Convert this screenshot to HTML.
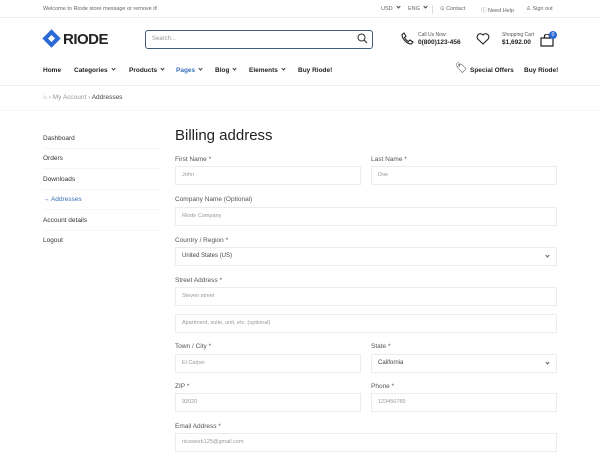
<!DOCTYPE html>
<html><head><meta charset="utf-8"><style>
*{margin:0;padding:0;box-sizing:border-box}
body{width:600px;height:450px;overflow:hidden;background:#fff;font-family:"Liberation Sans",sans-serif;color:#333;position:relative}
.a{position:absolute;white-space:nowrap}
.top{font-size:5.5px;color:#666}
.nav{font-size:6.5px;font-weight:bold;color:#222}
.lab{font-size:6.5px;color:#555}
.inp{position:absolute;height:19px;border:1px solid #ececec;font-size:5.5px;color:#999;padding-left:6px;line-height:17px}
.side{font-size:6.5px;color:#333;position:absolute;left:43px;width:117px;border-bottom:1px solid #f5f5f5;height:20px;line-height:20px}
.chev{position:absolute;right:7px;top:6px;width:3px;height:3px;border-right:1px solid #666;border-bottom:1px solid #666;transform:rotate(45deg)}
.dd:after{content:"";display:inline-block;width:2px;height:2px;border-right:1px solid #444;border-bottom:1px solid #444;transform:rotate(45deg);margin-left:4px;position:relative;top:-2px}
</style></head><body>
<div class="a" style="left:0;top:17px;width:600px;border-top:1px solid #eee"></div>
<div class="a top" style="left:43px;top:6px">Welcome to Riode store message or remove it!</div>
<div class="a top dd" style="left:381px;top:6px">USD</div>
<div class="a top dd" style="left:408px;top:6px">ENG</div>
<div class="a" style="left:432px;top:5px;height:9px;border-left:1px solid #ddd"></div>
<div class="a top" style="left:440px;top:6px">⊙ Contact</div>
<div class="a top" style="left:481px;top:6px">ⓘ Need Help</div>
<div class="a top" style="left:526px;top:6px">♙ Sign out</div>
<div class="a" style="left:45px;top:32px;width:13px;height:13px;background:#2b6bd6;transform:rotate(45deg)"></div>
<div class="a" style="left:49px;top:36px;width:5px;height:5px;background:#fff;transform:rotate(45deg)"></div>
<div class="a" style="left:63px;top:31px;font-size:15px;font-weight:bold;color:#222;letter-spacing:-0.5px">RIODE</div>
<div class="a" style="left:145px;top:30px;width:228px;height:19px;border:1.5px solid #3f5d7a;border-radius:3px;font-size:6px;color:#999;padding:5px 6px">Search...</div>
<svg class="a" style="left:357px;top:33px" width="11" height="11" viewBox="0 0 11 11"><circle cx="4.5" cy="4.5" r="3.5" fill="none" stroke="#333" stroke-width="1"/><path d="M7 7l3 3" stroke="#333" stroke-width="1.2"/></svg>
<svg class="a" style="left:401px;top:32px" width="13" height="13" viewBox="0 0 13 13"><path d="M3 1l2 3-1.5 1.5c1 2 2 3 4 4L9 8l3 2-1.5 2C6 12 1 7 1 2.5z" fill="none" stroke="#222" stroke-width="1.1"/></svg>
<div class="a" style="left:418px;top:32px;font-size:5px;color:#555">Call Us Now:</div>
<div class="a" style="left:418px;top:39px;font-size:6.5px;font-weight:bold;color:#222">0(800)123-456</div>
<svg class="a" style="left:476px;top:33px" width="14" height="12" viewBox="0 0 14 12"><path d="M7 11L1.8 6A3 3 0 017 2a3 3 0 015.2 4z" fill="none" stroke="#222" stroke-width="1.1"/></svg>
<div class="a" style="left:502px;top:32px;font-size:5px;color:#555">Shopping Cart</div>
<div class="a" style="left:502px;top:39px;font-size:6.5px;font-weight:bold;color:#222">$1,692.00</div>
<svg class="a" style="left:540px;top:34px" width="14" height="13" viewBox="0 0 14 13"><path d="M1 4h12v8H1z M4.5 4V2.5a2.5 2.5 0 015 0V4" fill="none" stroke="#222" stroke-width="1.2"/></svg>
<div class="a" style="left:549px;top:31px;width:8px;height:8px;border-radius:50%;background:#2b6bd6;color:#fff;font-size:5px;text-align:center;line-height:8px">0</div>
<div class="a nav" style="left:43px;top:67px">Home</div>
<div class="a nav dd" style="left:74px;top:67px">Categories</div>
<div class="a nav dd" style="left:129px;top:67px">Products</div>
<div class="a nav dd" style="left:176px;top:67px;color:#3a6fb8">Pages</div>
<div class="a nav dd" style="left:215px;top:67px">Blog</div>
<div class="a nav dd" style="left:249px;top:67px">Elements</div>
<div class="a nav" style="left:298px;top:67px">Buy Riode!</div>
<div class="a" style="left:455px;top:63px;font-size:10px">🏷</div>
<div class="a nav" style="left:470px;top:67px">Special Offers</div>
<div class="a nav" style="left:524px;top:67px">Buy Riode!</div>
<div class="a" style="left:0;top:85px;width:600px;border-top:1px solid #eee"></div>
<div class="a" style="left:43px;top:94px;font-size:6.5px;color:#999">⌂ › My Account › <span style="color:#444">Addresses</span></div>
<div class="a" style="left:0;top:110px;width:600px;border-top:1px solid #f5f5f5"></div>
<div class="side" style="top:129px">Dashboard</div>
<div class="side" style="top:149px">Orders</div>
<div class="side" style="top:170px">Downloads</div>
<div class="side" style="top:190px;color:#3a6fb8">→ Addresses</div>
<div class="side" style="top:211px">Account details</div>
<div class="side" style="top:231px;border:none">Logout</div>
<div class="a" style="left:175px;top:127px;font-size:15px;color:#222;font-weight:500">Billing address</div>
<div class="a lab" style="left:175px;top:156px">First Name *</div>
<div class="a lab" style="left:371px;top:156px">Last Name *</div>
<div class="inp" style="left:175px;top:166px;width:186px">John</div>
<div class="inp" style="left:371px;top:166px;width:186px">Doe</div>
<div class="a lab" style="left:175px;top:196px">Company Name (Optional)</div>
<div class="inp" style="left:175px;top:207px;width:382px">Riode Company</div>
<div class="a lab" style="left:175px;top:237px">Country / Region *</div>
<div class="inp" style="left:175px;top:247px;width:382px;color:#444;font-size:6px">United States (US)<span class="chev"></span></div>
<div class="a lab" style="left:175px;top:277px">Street Address *</div>
<div class="inp" style="left:175px;top:287px;width:382px">Steven street</div>
<div class="inp" style="left:175px;top:314px;width:382px">Apartment, suite, unit, etc. (optional)</div>
<div class="a lab" style="left:175px;top:343px">Town / City *</div>
<div class="a lab" style="left:371px;top:343px">State *</div>
<div class="inp" style="left:175px;top:354px;width:186px">El Carjon</div>
<div class="inp" style="left:371px;top:354px;width:186px;color:#444;font-size:6px">California<span class="chev"></span></div>
<div class="a lab" style="left:175px;top:383px">ZIP *</div>
<div class="a lab" style="left:371px;top:383px">Phone *</div>
<div class="inp" style="left:175px;top:393px;width:186px">92020</div>
<div class="inp" style="left:371px;top:393px;width:186px">123456789</div>
<div class="a lab" style="left:175px;top:423px">Email Address *</div>
<div class="inp" style="left:175px;top:433px;width:382px">nicework125@gmail.com</div>
</body></html>
